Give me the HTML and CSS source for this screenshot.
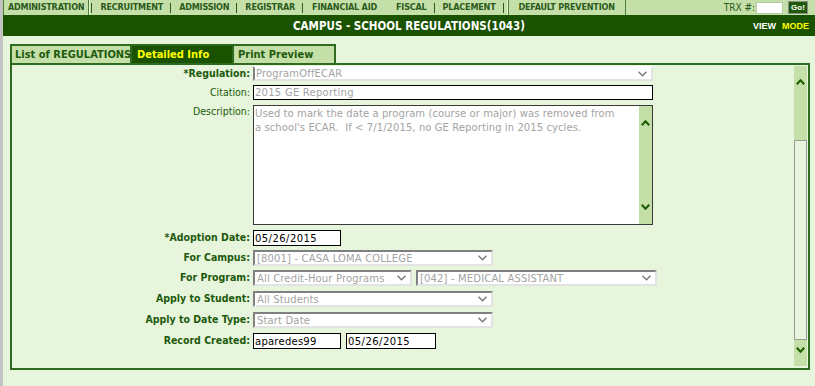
FILE: index.html
```html
<!DOCTYPE html>
<html>
<head>
    <title>Campus - School Regulations</title>
    <link rel="stylesheet" href="styles.css">
</head>
<body>
<div class="page">
    <div class="topnav">
        <span class="nav-item active">ADMINISTRATION</span>
        <span class="sep first"></span>
        <span class="nav-item">RECRUITMENT</span>
        <span class="sep"></span>
        <span class="nav-item">ADMISSION</span>
        <span class="sep"></span>
        <span class="nav-item">REGISTRAR</span>
        <span class="sep"></span>
        <span class="nav-item finaid">FINANCIAL AID</span>
        <span class="nav-item fiscal">FISCAL</span>
        <span class="sep"></span>
        <span class="nav-item">PLACEMENT</span>
        <span class="sep"></span>
        <span class="nav-item boxed">DEFAULT PREVENTION</span>
        <div class="trx">
            <label for="trx-input">TRX #:</label>
            <input type="text" id="trx-input" class="trx-input">
            <button class="go">Go!</button>
        </div>
    </div>

    <div class="titlebar">
        <div class="title">CAMPUS - SCHOOL REGULATIONS(1043)</div>
        <div class="mode"><span class="view">VIEW</span><span class="mode-on">MODE</span></div>
    </div>

    <div class="content">
        <div class="tabs">
            <div class="tab tab-list">List of REGULATIONS</div>
            <div class="tab tab-detail selected">Detailed Info</div>
            <div class="tab tab-print">Print Preview</div>
        </div>

        <div class="panel">
            <div class="form">
                <div class="lbl">*Regulation:</div>
                <div class="cell">
                    <div class="sel sel-reg w400">
                        <span>ProgramOffECAR</span>
                        <svg class="chev" width="9" height="6" viewBox="0 0 9 6"><polyline points="0.5,0.8 4.5,4.8 8.5,0.8" fill="none" stroke="#7b7b7b" stroke-width="1.5"/></svg>
                    </div>
                </div>

                <div class="lbl plain">Citation:</div>
                <div class="cell"><input type="text" class="txt dim w400" value="2015 GE Reporting" readonly></div>

                <div class="lbl plain top">Description:</div>
                <div class="cell">
                    <div class="textarea">
                        <div class="ta-text">Used to mark the date a program (course or major) was removed from
a school's ECAR.  If &lt; 7/1/2015, no GE Reporting in 2015 cycles.</div>
                        <div class="ta-scroll">
                            <svg width="9" height="6" viewBox="0 0 9 6"><polyline points="0.8,5.2 4.5,1.2 8.2,5.2" fill="none" stroke="#1d5c05" stroke-width="2"/></svg>
                            <svg width="9" height="6" viewBox="0 0 9 6"><polyline points="0.8,0.8 4.5,4.8 8.2,0.8" fill="none" stroke="#1d5c05" stroke-width="2"/></svg>
                        </div>
                    </div>
                </div>

                <div class="lbl">*Adoption Date:</div>
                <div class="cell"><input type="text" class="txt date w88" value="05/26/2015" readonly></div>

                <div class="lbl">For Campus:</div>
                <div class="cell">
                    <div class="sel w240">
                        <span>[8001] - CASA LOMA COLLEGE</span>
                        <svg class="chev" width="9" height="6" viewBox="0 0 9 6"><polyline points="0.5,0.8 4.5,4.8 8.5,0.8" fill="none" stroke="#7b7b7b" stroke-width="1.5"/></svg>
                    </div>
                </div>

                <div class="lbl">For Program:</div>
                <div class="cell">
                    <div class="sel w159">
                        <span>All Credit-Hour Programs</span>
                        <svg class="chev" width="9" height="6" viewBox="0 0 9 6"><polyline points="0.5,0.8 4.5,4.8 8.5,0.8" fill="none" stroke="#7b7b7b" stroke-width="1.5"/></svg>
                    </div>
                    <div class="sel w241">
                        <span>[042] - MEDICAL ASSISTANT</span>
                        <svg class="chev" width="9" height="6" viewBox="0 0 9 6"><polyline points="0.5,0.8 4.5,4.8 8.5,0.8" fill="none" stroke="#7b7b7b" stroke-width="1.5"/></svg>
                    </div>
                </div>

                <div class="lbl">Apply to Student:</div>
                <div class="cell">
                    <div class="sel w240">
                        <span>All Students</span>
                        <svg class="chev" width="9" height="6" viewBox="0 0 9 6"><polyline points="0.5,0.8 4.5,4.8 8.5,0.8" fill="none" stroke="#7b7b7b" stroke-width="1.5"/></svg>
                    </div>
                </div>

                <div class="lbl">Apply to Date Type:</div>
                <div class="cell">
                    <div class="sel w240">
                        <span>Start Date</span>
                        <svg class="chev" width="9" height="6" viewBox="0 0 9 6"><polyline points="0.5,0.8 4.5,4.8 8.5,0.8" fill="none" stroke="#7b7b7b" stroke-width="1.5"/></svg>
                    </div>
                </div>

                <div class="lbl">Record Created:</div>
                <div class="cell gap5">
                    <input type="text" class="txt w88" value="aparedes99" readonly>
                    <input type="text" class="txt date w90" value="05/26/2015" readonly>
                </div>
            </div>

            <div class="vscroll">
                <div class="sb-up">
                    <svg width="9" height="6" viewBox="0 0 9 6"><polyline points="0.8,5.2 4.5,1.2 8.2,5.2" fill="none" stroke="#1d5c05" stroke-width="2"/></svg>
                </div>
                <div class="sb-gap"></div>
                <div class="sb-thumb"></div>
                <div class="sb-down">
                    <svg width="9" height="6" viewBox="0 0 9 6"><polyline points="0.8,0.8 4.5,4.8 8.2,0.8" fill="none" stroke="#1d5c05" stroke-width="2"/></svg>
                </div>
            </div>
        </div>
    </div>
</div>
</body>
</html>
```

FILE: styles.css
```css
body {
    margin: 0;
    background-color: #e6f5dc;
    font-family: "DejaVu Sans Condensed", "DejaVu Sans", sans-serif;
}
.page {
    border-left: 3px solid #c3c3c3;
    min-height: 386px;
    box-sizing: border-box;
}

/* top navigation */
.topnav {
    display: flex;
    align-items: center;
    height: 15px;
    background-color: #c5dfa8;
    color: #2b5a1c;
    font-size: 9px;
    font-weight: bold;
    letter-spacing: -0.2px;
}
.nav-item {
    line-height: 15px;
    white-space: nowrap;
}
.nav-item.active {
    padding: 0 4px;
    border-left: 1px solid #4a7f35;
    border-right: 1px solid #4a7f35;
    box-shadow: 1px 0 0 #e6f5dc;
}
.nav-item.boxed {
    padding: 0 10px;
    margin-left: -4px;
    border-left: 1px solid #4a7f35;
    border-right: 1px solid #4a7f35;
    box-shadow: -1px 0 0 #e6f5dc;
}
.nav-item.finaid {
    margin-left: 1px;
}
.nav-item.fiscal {
    margin-left: 19px;
}
.sep {
    width: 1px;
    height: 10px;
    background-color: #2b5a1c;
    margin: 0 8px 0 7px;
}
.sep.first {
    margin-left: 2px;
}
.trx {
    margin-left: auto;
    margin-right: 7px;
    display: flex;
    align-items: center;
    font-weight: normal;
    font-size: 10px;
    letter-spacing: 0;
}
.trx-input {
    width: 27px;
    height: 12px;
    margin: 0 0 0 1px;
    padding: 0;
    border: 1px solid #b5c9a3;
    background-color: #ffffff;
    box-sizing: border-box;
}
.go {
    margin-left: 5px;
    width: 20px;
    height: 13px;
    padding: 0;
    background-color: #1f5a0a;
    border: 1px solid #8c8c8c;
    color: #ffffff;
    font: bold 8px "Liberation Sans", sans-serif;
}

/* title bar */
.titlebar {
    display: grid;
    grid-template-columns: 1fr auto 1fr;
    align-items: center;
    height: 21px;
    background-color: #1a5200;
}
.title {
    grid-column: 2;
    color: #ffffff;
    font-weight: bold;
    font-size: 11.5px;
    padding-top: 1px;
}
.mode {
    justify-self: end;
    margin-right: 6px;
    font: bold 9px "Liberation Sans", sans-serif;
}
.view {
    color: #ffffff;
    margin-right: 6px;
}
.mode-on {
    color: #ffff00;
}

/* tabs and panel */
.content {
    padding: 8px 5px 0 7px;
}
.tabs {
    display: flex;
    height: 19px;
}
.tab {
    box-sizing: border-box;
    height: 19px;
    border: 2px solid #2f6b1f;
    border-bottom: none;
    background-color: #c5dfa8;
    color: #1e5a0c;
    font-size: 11px;
    font-weight: bold;
    line-height: 17px;
    padding-left: 3px;
    white-space: nowrap;
}
.tab-list {
    width: 122px;
}
.tab-detail {
    width: 102px;
    border-left: none;
    padding-left: 5px;
}
.tab-print {
    width: 102px;
    border-left: none;
    padding-left: 4px;
}
.tab.selected {
    background-color: #1a5200;
    color: #ffff00;
}
.panel {
    display: flex;
    height: 307px;
    box-sizing: border-box;
    border: 2px solid #2f6b1f;
}
.form {
    flex: 1;
    display: grid;
    grid-template-columns: 238px auto;
    grid-template-rows: 19px 20px 125px 20px 20px 21px 21px 21px 20px;
    column-gap: 3px;
    align-content: start;
    padding-top: 1px;
}
.lbl {
    text-align: right;
    font-size: 10.5px;
    font-weight: bold;
    color: #1e5a0c;
    line-height: 15px;
    white-space: nowrap;
}
.lbl.plain {
    font-weight: normal;
}
.lbl.top {
    line-height: 12px;
}
.cell {
    display: flex;
    align-items: flex-start;
    gap: 4px;
}
.cell.gap5 {
    gap: 5px;
}

/* fields */
.sel {
    box-sizing: border-box;
    height: 16px;
    display: flex;
    align-items: center;
    justify-content: space-between;
    padding: 0 4px 0 2px;
    border-style: solid;
    border-width: 2px;
    border-color: #808080 #e3e3e3 #e3e3e3 #808080;
    background-color: #ffffff;
    color: #a3a3a3;
    font: 10px "DejaVu Sans", sans-serif;
    letter-spacing: 0.15px;
    white-space: nowrap;
    overflow: hidden;
}
.sel-reg {
    height: 15px;
    border-top-color: #ffffff;
    padding-left: 1px;
}
.chev {
    flex: none;
}
.txt {
    box-sizing: border-box;
    height: 16px;
    margin: 0;
    padding: 0 1px;
    border: 1px solid #000000;
    background-color: #ffffff;
    color: #000000;
    font: 10px "DejaVu Sans", sans-serif;
    letter-spacing: 0.25px;
}
.txt.date {
    letter-spacing: 0.45px;
}
.txt.dim {
    height: 15px;
    color: #a3a3a3;
}
.w400 { width: 400px; }
.w88 { width: 88px; }
.w90 { width: 90px; }
.w240 { width: 240px; }
.w159 { width: 159px; }
.w241 { width: 241px; }

.textarea {
    box-sizing: border-box;
    width: 400px;
    height: 120px;
    display: flex;
    border: 1px solid #3a3a3a;
    background-color: #ffffff;
}
.ta-text {
    flex: 1;
    padding: 1px 1px;
    color: #a3a3a3;
    font: 10px "DejaVu Sans", sans-serif;
    letter-spacing: 0.08px;
    line-height: 14px;
    white-space: pre;
    overflow: hidden;
}
.ta-scroll {
    width: 13px;
    display: flex;
    flex-direction: column;
    justify-content: space-between;
    align-items: center;
    padding: 14px 0;
    background-color: #c5dfa8;
}

/* panel scrollbar */
.vscroll {
    width: 13px;
    margin: 1px 1px 2px 0;
    display: flex;
    flex-direction: column;
    background-color: #c5dfa8;
}
.sb-up {
    height: 32px;
    display: flex;
    align-items: center;
    justify-content: center;
}
.sb-gap {
    height: 42px;
}
.sb-thumb {
    box-sizing: border-box;
    height: 200px;
    border: 1px solid #9a9a9a;
    background-color: #e6f5dc;
}
.sb-down {
    height: 20px;
    display: flex;
    align-items: center;
    justify-content: center;
}
```
